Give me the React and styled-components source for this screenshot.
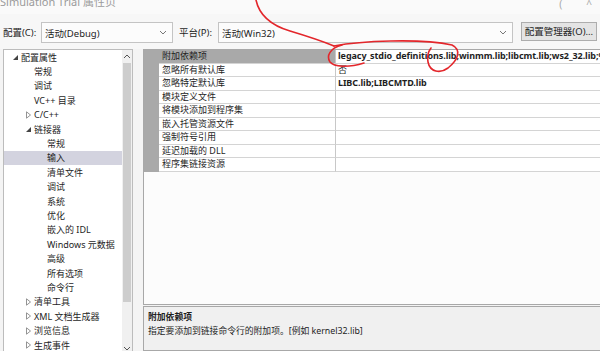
import React from "react";
import styled, { createGlobalStyle } from "styled-components";

const GlobalStyle = createGlobalStyle`
  html, body {
    margin: 0;
    padding: 0;
  }
  body {
    width: 600px;
    height: 351px;
    overflow: hidden;
    background: #f4f4f4;
    font-family: "Noto Sans", "Noto Sans CJK SC", sans-serif;
    color: #1e1e1e;
  }
`;

const Dialog = styled.div`
  position: relative;
  width: 600px;
  height: 351px;
  overflow: hidden;
  background: #f4f4f4;
`;

const TitleBar = styled.div`
  height: 14px;
  display: flex;
  justify-content: space-between;
  align-items: flex-start;
  overflow: hidden;
  background: #fafafa;
`;

const Title = styled.div`
  margin-top: -5px;
  font-size: 11px;
  line-height: 14px;
  color: #9a9a9a;
`;

const TitleButtons = styled.div`
  display: flex;
  gap: 24px;
  margin-top: -3px;
  margin-right: 8px;
  font-size: 10px;
  color: #a8a8a8;
`;

const ConfigBar = styled.div`
  height: 35px;
  box-sizing: border-box;
  padding: 8px 3px 0 3px;
  display: flex;
  align-items: flex-start;
  background: #f7f7f7;
`;

const FieldLabel = styled.div`
  width: ${(p) => p.width}px;
  margin-left: ${(p) => p.offset || 0}px;
  height: 21px;
  line-height: 21px;
  font-size: 9.5px;
  white-space: nowrap;
`;

const Select = styled.div`
  width: ${(p) => (p.width ? `${p.width}px` : "auto")};
  flex: ${(p) => (p.width ? "none" : 1)};
  height: 21px;
  box-sizing: border-box;
  border: 1px solid #c4c4c4;
  background: #fcfcfc;
  display: flex;
  align-items: center;
  justify-content: space-between;
  padding: 0 5px 0 3px;
  font-size: 9.5px;
`;

const ManagerButton = styled.div`
  width: 76px;
  height: 19px;
  margin-left: 8px;
  box-sizing: border-box;
  border: 1px solid #adadad;
  background: #e4e4e4;
  font-size: 9.5px;
  line-height: 17px;
  text-align: center;
  white-space: nowrap;
`;

const Body = styled.div`
  display: flex;
  height: 302px;
  padding-left: 3px;
  gap: 10px;
`;

const TreePanel = styled.div`
  width: 130px;
  height: 308px;
  box-sizing: border-box;
  border: 1px solid #bcbcbc;
  background: #ffffff;
  display: flex;
  flex: none;
`;

const TreeList = styled.div`
  flex: 1;
`;

const TreeRow = styled.div`
  height: 14.4px;
  display: flex;
  align-items: center;
  padding-left: ${(p) => p.level * 13 + 8}px;
  background: ${(p) => (p.selected ? "#d3d3df" : "transparent")};
  font-size: 9px;
  white-space: nowrap;
`;

const ArrowSlot = styled.span`
  width: 9px;
  height: 8px;
  display: flex;
  align-items: center;
`;

const ScrollBar = styled.div`
  width: 10px;
  display: flex;
  flex-direction: column;
  background: #f0f0f0;
`;

const ScrollArrow = styled.div`
  height: ${(p) => p.size}px;
  display: flex;
  align-items: center;
  justify-content: center;
  flex: none;
`;

const ScrollThumb = styled.div`
  height: 239px;
  margin: 0 1px;
  background: #cdcdcd;
  flex: none;
`;

const ScrollTrack = styled.div`
  flex: 1;
`;

const RightPane = styled.div`
  flex: 1;
  margin-right: -3px;
  display: flex;
  flex-direction: column;
`;

const Grid = styled.div`
  height: 257px;
  box-sizing: border-box;
  border: 1px solid #a8a8a8;
  background: #fcfcfc;
`;

const GridRow = styled.div`
  height: 13.5px;
  box-sizing: border-box;
  display: grid;
  grid-template-columns: 15px 176px 1fr;
  font-size: 9px;
`;

const Gutter = styled.div`
  background: #a9a9a9;
`;

const NameCell = styled.div`
  padding-left: 3px;
  line-height: 12.5px;
  border-bottom: 1px solid #d4d4d4;
  background: ${(p) => (p.selected ? "#a9a9a9" : "#ffffff")};
  white-space: nowrap;
  overflow: hidden;
`;

const ValueCell = styled.div`
  padding-left: 2px;
  line-height: 12.5px;
  border-left: 1px solid #c8c8c8;
  border-bottom: 1px solid #d4d4d4;
  background: #ffffff;
  font-weight: ${(p) => (p.bold ? 700 : 400)};
  letter-spacing: ${(p) => (p.bold ? "-0.08px" : "0")};
  white-space: nowrap;
  overflow: hidden;
`;

const Description = styled.div`
  margin-top: 1px;
  height: 45px;
  box-sizing: border-box;
  border: 1px solid #a8a8a8;
  background: #f0f0f0;
  padding: 3px 4px;
  font-size: 8.8px;
  line-height: 14px;
`;

const DescTitle = styled.div`
  font-weight: 700;
`;

const Annotation = styled.svg`
  position: absolute;
  left: 0;
  top: 0;
  pointer-events: none;
`;

const treeItems = [
  { label: "配置属性", level: 0, arrow: "open" },
  { label: "常规", level: 1 },
  { label: "调试", level: 1 },
  { label: "VC++ 目录", level: 1 },
  { label: "C/C++", level: 1, arrow: "closed" },
  { label: "链接器", level: 1, arrow: "open" },
  { label: "常规", level: 2 },
  { label: "输入", level: 2, selected: true },
  { label: "清单文件", level: 2 },
  { label: "调试", level: 2 },
  { label: "系统", level: 2 },
  { label: "优化", level: 2 },
  { label: "嵌入的 IDL", level: 2 },
  { label: "Windows 元数据", level: 2 },
  { label: "高级", level: 2 },
  { label: "所有选项", level: 2 },
  { label: "命令行", level: 2 },
  { label: "清单工具", level: 1, arrow: "closed" },
  { label: "XML 文档生成器", level: 1, arrow: "closed" },
  { label: "浏览信息", level: 1, arrow: "closed" },
  { label: "生成事件", level: 1, arrow: "closed" },
];

const gridRows = [
  {
    name: "附加依赖项",
    value: "legacy_stdio_definitions.lib;winmm.lib;libcmt.lib;ws2_32.lib;%(AdditionalDependencies)",
    bold: true,
    selected: true,
  },
  { name: "忽略所有默认库", value: "否" },
  { name: "忽略特定默认库", value: "LIBC.lib;LIBCMTD.lib", bold: true },
  { name: "模块定义文件", value: "" },
  { name: "将模块添加到程序集", value: "" },
  { name: "嵌入托管资源文件", value: "" },
  { name: "强制符号引用", value: "" },
  { name: "延迟加载的 DLL", value: "" },
  { name: "程序集链接资源", value: "" },
];

const TreeArrow = ({ type }) => {
  if (type === "open") {
    return (
      <svg width="7" height="7" viewBox="0 0 7 7">
        <polygon points="6,1 6,6 1,6" fill="#444" />
      </svg>
    );
  }
  if (type === "closed") {
    return (
      <svg width="7" height="8" viewBox="0 0 7 8">
        <polygon points="1.5,0.8 5.5,4 1.5,7.2" fill="none" stroke="#888" strokeWidth="0.9" />
      </svg>
    );
  }
  return null;
};

const Chevron = ({ dir = "down", color = "#777" }) => (
  <svg width="8" height="5" viewBox="0 0 8 5">
    <polyline
      points={dir === "down" ? "1,1 4,4 7,1" : "1,4 4,1 7,4"}
      fill="none"
      stroke={color}
      strokeWidth="1"
    />
  </svg>
);

export default function App() {
  return (
    <Dialog>
      <GlobalStyle />
      <TitleBar>
        <Title>Simulation Trial 属性页</Title>
        <TitleButtons>
          <span>(</span>
          <span>^</span>
        </TitleButtons>
      </TitleBar>

      <ConfigBar>
        <FieldLabel width={38}>配置(C):</FieldLabel>
        <Select width={132}>
          活动(Debug)
          <Chevron />
        </Select>
        <FieldLabel width={39} offset={6}>
          平台(P):
        </FieldLabel>
        <Select>
          活动(Win32)
          <Chevron />
        </Select>
        <ManagerButton>配置管理器(O)...</ManagerButton>
      </ConfigBar>

      <Body>
        <TreePanel>
          <TreeList>
            {treeItems.map((item, i) => (
              <TreeRow key={i} level={item.level} selected={item.selected}>
                <ArrowSlot>
                  <TreeArrow type={item.arrow} />
                </ArrowSlot>
                {item.label}
              </TreeRow>
            ))}
          </TreeList>
          <ScrollBar>
            <ScrollArrow size={13}>
              <Chevron dir="up" color="#555" />
            </ScrollArrow>
            <ScrollThumb />
            <ScrollTrack />
            <ScrollArrow size={16}>
              <Chevron color="#555" />
            </ScrollArrow>
          </ScrollBar>
        </TreePanel>

        <RightPane>
          <Grid>
            {gridRows.map((row, i) => (
              <GridRow key={i}>
                <Gutter />
                <NameCell selected={row.selected}>{row.name}</NameCell>
                <ValueCell bold={row.bold}>{row.value}</ValueCell>
              </GridRow>
            ))}
          </Grid>
          <Description>
            <DescTitle>附加依赖项</DescTitle>
            <div>指定要添加到链接命令行的附加项。[例如 kernel32.lib]</div>
          </Description>
        </RightPane>
      </Body>

      <Annotation width="600" height="351" viewBox="0 0 600 351">
        <g fill="none" stroke="#e3262b" strokeWidth="1.6" strokeLinecap="round">
          <path d="M256,0 C259,14 270,25 290,31 S322,41 334,46" />
          <path d="M334,46 C360,41 420,38 452,45 C462,50 458,60 448,68 C440,74 430,72 428,62 C427,57 428,52 431,48" />
          <path d="M342,45 C330,48 326,56 330,62 C334,67 348,68 364,63" />
        </g>
      </Annotation>
    </Dialog>
  );
}
